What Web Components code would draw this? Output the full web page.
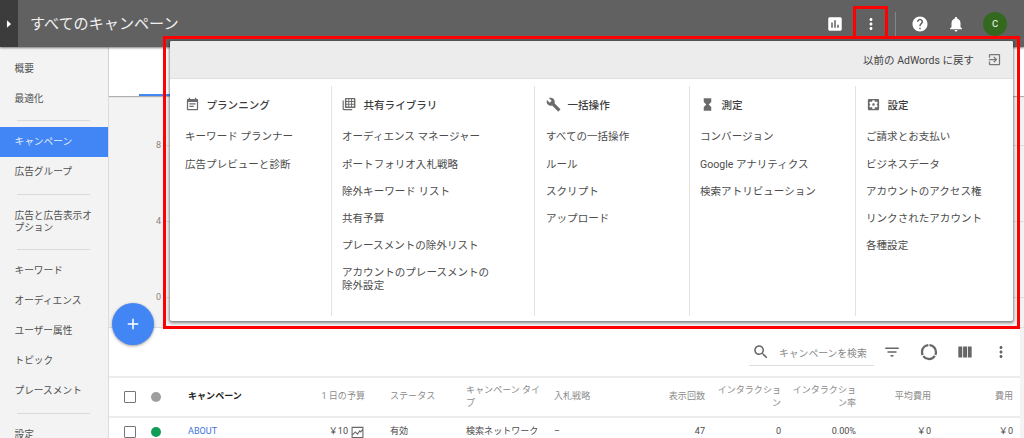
<!DOCTYPE html>
<html lang="ja"><head><meta charset="utf-8"><title>すべてのキャンペーン</title>
<style>
html,body{margin:0;height:438px;overflow:hidden;background:#f3f3f3}
body{font-family:Roboto,"Noto Sans CJK JP",sans-serif;color:#555;font-size:10.5px}
</style></head><body>
<ads-app></ads-app>
<script>
const ICONS = {
 report:'<path d="M19 3H5c-1.1 0-2 .9-2 2v14c0 1.1.9 2 2 2h14c1.1 0 2-.9 2-2V5c0-1.1-.9-2-2-2zM9 17H7v-7h2v7zm4 0h-2V7h2v10zm4 0h-2v-4h2v4z"/>',
 more:'<path d="M12 8c1.1 0 2-.9 2-2s-.9-2-2-2-2 .9-2 2 .9 2 2 2zm0 2c-1.1 0-2 .9-2 2s.9 2 2 2 2-.9 2-2-.9-2-2-2zm0 6c-1.1 0-2 .9-2 2s.9 2 2 2 2-.9 2-2-.9-2-2-2z"/>',
 help:'<path d="M12 2C6.48 2 2 6.48 2 12s4.480 10 10 10 10-4.480 10-10S17.520 2 12 2zm1 17h-2v-2h2v2zm2.070-7.750l-.9.920C13.450 12.900 13 13.500 13 15h-2v-.5c0-1.100.450-2.100 1.170-2.830l1.240-1.260c.370-.360.590-.860.590-1.410 0-1.100-.9-2-2-2s-2 .9-2 2H8c0-2.210 1.790-4 4-4s4 1.790 4 4c0 .880-.360 1.680-.930 2.250z"/>',
 bell:'<path d="M12 22c1.100 0 2-.9 2-2h-4c0 1.100.890 2 2 2zm6-6v-5c0-3.070-1.640-5.640-4.500-6.320V4c0-.830-.670-1.500-1.500-1.500s-1.500.670-1.500 1.500v.680C7.630 5.360 6 7.920 6 11v5l-2 2v1h16v-1l-2-2z"/>',
 exit:'<path d="M10.090 15.590L11.500 17l5-5-5-5-1.410 1.410L12.670 11H3v2h9.670l-2.580 2.590zM19 3H5c-1.110 0-2 .9-2 2v4h2V5h14v14H5v-4H3v4c0 1.100.890 2 2 2h14c1.100 0 2-.9 2-2V5c0-1.100-.9-2-2-2z"/>',
 note:'<path d="M17 10H7v2h10v-2zm2-7h-1V1h-2v2H8V1H6v2H5c-1.110 0-1.990.9-1.990 2L3 19c0 1.100.890 2 2 2h14c1.100 0 2-.9 2-2V5c0-1.100-.9-2-2-2zm0 16H5V8h14v11zm-5-5H7v2h7v-2z"/>',
 library:'<path d="M1 6v14.500c0 1.100.9 2 2 2h14.500v-2H3V6z"/><path fill-rule="evenodd" d="M7 1.500h14c1.100 0 2 .9 2 2v13.500c0 1.100-.9 2-2 2H7c-1.100 0-2-.9-2-2V3.500c0-1.100.9-2 2-2zm.5 2.500v3h3.300V4zm4.800 0v3h3.300V4zm4.900 0v3h3.300V4zM7.500 8.700v3h3.300v-3zm4.800 0v3h3.300v-3zm4.900 0v3h3.300v-3zM7.500 13.400v3h3.300v-3zm4.800 0v3h3.300v-3zm4.900 0v3h3.300v-3z"/>',
 wrench:'<path d="M22.700 19l-9.100-9.100c.9-2.300.4-5-1.500-6.900-2-2-5-2.400-7.400-1.300L9 6 6 9 1.600 4.700C.4 7.100.9 10.100 2.900 12.100c1.900 1.900 4.600 2.400 6.900 1.500l9.100 9.100c.4.4 1 .4 1.400 0l2.300-2.300c.5-.4.5-1.100.1-1.400z"/>',
 hourglass:'<path d="M6 2v6h.01L6 8.010 10 12l-4 4 .01.01H6V22h12v-5.990h-.01L18 16l-4-4 4-3.990-.01-.01H18V2H6z"/>',
 settings:'<path d="M12 10c-1.100 0-2 .9-2 2s.9 2 2 2 2-.9 2-2-.9-2-2-2zm7-7H5c-1.110 0-2 .9-2 2v14c0 1.100.890 2 2 2h14c1.110 0 2-.9 2-2V5c0-1.100-.890-2-2-2zm-1.750 9c0 .230-.020.460-.050.680l1.480 1.160c.130.110.170.300.080.450l-1.400 2.420c-.090.150-.270.210-.430.150l-1.740-.700c-.360.280-.760.510-1.180.690l-.260 1.850c-.030.170-.180.300-.350.300h-2.800c-.170 0-.320-.130-.350-.290l-.260-1.850c-.430-.180-.820-.410-1.180-.690l-1.740.700c-.160.060-.340 0-.430-.150l-1.400-2.420c-.090-.150-.050-.340.080-.450l1.480-1.160c-.030-.230-.050-.460-.050-.690s.020-.460.050-.680l-1.480-1.160c-.130-.110-.170-.300-.080-.450l1.400-2.420c.090-.150.270-.210.430-.150l1.740.700c.360-.280.760-.510 1.180-.690l.260-1.850c.030-.170.180-.300.350-.300h2.800c.170 0 .320.130.350.290l.260 1.850c.430.180.820.410 1.180.690l1.740-.700c.160-.060.340 0 .430.150l1.400 2.420c.090.150.050.340-.080.450l-1.480 1.160c.030.230.050.460.050.690z"/>',
 search:'<path d="M15.500 14h-.790l-.280-.270C15.410 12.590 16 11.110 16 9.500 16 5.910 13.090 3 9.500 3S3 5.910 3 9.500 5.910 16 9.500 16c1.610 0 3.090-.590 4.230-1.570l.270.280v.790l5 4.990L20.490 19l-4.990-5zm-6 0C7.010 14 5 11.990 5 9.500S7.010 5 9.500 5 14 7.010 14 9.500 11.990 14 9.500 14z"/>',
 filter:'<path d="M10 18h4v-2h-4v2zM3 6v2h18V6H3zm3 7h12v-2H6v2z"/>',
 donut:'<circle cx="12" cy="12" r="8.400" fill="none" stroke="currentColor" stroke-width="2.700" pathLength="300" stroke-dasharray="92 8" transform="rotate(-86 12 12)"/>',
 columns:'<path d="M4 5.500h4.700v13H4zM9.700 5.500h4.700v13H9.700zM15.400 5.500H20v13h-4.600z"/>',
 trend:'<path fill="none" stroke="currentColor" stroke-width="2" d="M2 2.500h20v19H2zM2 17l6-6 4 4 4-6 2 2 4-5"/>',
 plus:'<path d="M19 13h-6v6h-2v-6H5v-2h6V5h2v6h6v2z"/>',
 play:'<path d="M7 3l10 9-10 9z"/>'
};
function define(name, markup){
  customElements.define(name, class extends HTMLElement{
    constructor(){ super(); this.attachShadow({mode:'open'}).innerHTML = markup; }
  });
}
customElements.define('md-icon', class extends HTMLElement{
  connectedCallback(){
    if(this.shadowRoot) return;
    const s = this.getAttribute('size') || 16;
    this.attachShadow({mode:'open'}).innerHTML =
     `<style>:host{display:block;flex:none;width:${s}px;height:${s}px}svg{display:block;fill:currentColor}</style><svg width="${s}" height="${s}" viewBox="0 0 24 24">${ICONS[this.getAttribute('name')]}</svg>`;
  }
});

define('top-bar', `<style>
:host{display:flex;height:47px;background:#616161;color:#fff;box-shadow:0 1px 2px rgba(0,0,0,.5);position:relative}
.tog{width:18px;background:#3c3c3c;display:grid;place-items:center}
h1{font-weight:400;font-size:15.100px;line-height:49px;margin:0 auto 0 12px;color:#f0f0f0;white-space:nowrap}
.r{display:flex;align-items:center}
.sep{width:1px;height:24px;background:#858585;margin:0 15px 0 15px}
.av{width:24px;height:24px;border-radius:50%;background:#33691e;display:grid;place-items:center;font-size:9.5px;font-weight:500;color:#dfe8da;margin:0 17px 0 18px}
.m{margin-left:18px}.b{margin-left:18px}
</style><div class="tog"><md-icon name="play" size="10"></md-icon></div><h1>すべてのキャンペーン</h1>
<div class="r"><md-icon name="report" size="18"></md-icon><md-icon class="m" name="more" size="18"></md-icon><span class="sep"></span><md-icon name="help" size="18"></md-icon><md-icon class="b" name="bell" size="18"></md-icon><span class="av">C</span></div>`);

define('nav-item', `<style>
:host{display:flex;align-items:center;height:30.200px;padding-left:14.500px;font-size:9.700px;line-height:12px;color:#505050;white-space:nowrap}
:host([tall]){height:42px}
:host([active]){background:#4285f4;color:#e6efff;height:30px}
</style><span><slot></slot></span>`);
define('nav-divider', `<style>:host{display:block;height:1px;background:#dadada;margin:6px 18px 6px 17px}</style>`);
define('side-nav', `<style>
:host{display:block;box-sizing:border-box;width:109px;flex:none;background:#f3f3f3;border-right:1px solid #dcdcdc;padding-top:7px;overflow:hidden}
</style><nav-item>概要</nav-item><nav-item>最適化</nav-item><nav-divider></nav-divider>
<nav-item active>キャンペーン</nav-item><nav-item>広告グループ</nav-item><nav-divider></nav-divider>
<nav-item tall>広告と広告表示オ<br>プション</nav-item><nav-divider></nav-divider>
<nav-item>キーワード</nav-item><nav-item>オーディエンス</nav-item><nav-item>ユーザー属性</nav-item><nav-item>トピック</nav-item><nav-item>プレースメント</nav-item><nav-divider></nav-divider><nav-item>設定</nav-item>`);

define('chart-area', `<style>
:host{display:block}
.tabs{height:49px;background:#fff;box-shadow:0 1px 1px rgba(0,0,0,.28);display:flex;align-items:flex-end;position:relative}
.tabs i{width:60px;height:2px;background:#4285f4;margin-left:30px}
.plot{height:232px;border-bottom:1px solid #ddd;display:flex;flex-direction:column;padding-top:11px;box-sizing:border-box;overflow:hidden}
.tick{display:flex;flex:none;align-items:center;height:76px;color:#858585;font-size:9px}
.tick span{width:52px;text-align:right}.tick i{height:1px;flex:1;background:#dedede;margin-left:5px}
</style><div class="tabs"><i></i></div><div class="plot"><div class="tick"><span>8</span><i></i></div><div class="tick"><span>4</span><i></i></div><div class="tick"><span>0</span><i></i></div></div>`);

define('table-tools', `<style>
:host{display:flex;height:48px;align-items:center;justify-content:flex-end;border-bottom:2px solid #ececec;color:#666}
.s{display:flex;align-items:center;width:125px;height:27px;border-bottom:1px solid #ddd;box-sizing:border-box;margin-right:9px;color:#888;font-size:9.800px;white-space:nowrap}
.s md-icon{color:#666;margin:0 9px 0 3px}
.s span{padding-top:2px}
.d{margin-left:18px}.c{margin-left:16px}.m{margin:0 10px 0 17px}
</style><div class="s"><md-icon name="search" size="18"></md-icon><span>キャンペーンを検索</span></div>
<md-icon name="filter" size="18"></md-icon><md-icon class="d" name="donut" size="20"></md-icon><md-icon class="c" name="columns" size="20"></md-icon><md-icon class="m" name="more" size="18"></md-icon>`);

define('table-row', `<style>
:host{display:grid;grid-template-columns:26px 38px 112px 65px 101px 88px 86px 65px 76px 75px 75px 82px;padding-left:15px;height:28px;align-items:center;font-size:9.050px;line-height:13.500px;white-space:nowrap;color:#4a4a4a}
:host([head]){height:38px;border-bottom:2px solid #ececec;color:#8c8c8c}
.box{width:12px;height:12px;box-sizing:border-box;border:1.500px solid #757575;border-radius:1px}
.dot{width:10px;height:10px;border-radius:50%;background:var(--dot,#9e9e9e);margin-left:1px}
slot{display:block}.r{text-align:right}slot[name=status]{padding-left:25px}
</style><span class="box"></span><span class="dot"></span><slot name="name"></slot><slot name="budget" class="r"></slot><slot name="status"></slot><slot name="type"></slot><slot name="bid"></slot><slot name="impr" class="r"></slot><slot name="inter" class="r"></slot><slot name="rate" class="r"></slot><slot name="avg" class="r"></slot><slot name="cost" class="r"></slot>`);

define('campaign-table', `<style>
:host{display:block;background:#fff;margin-right:4px;height:110px;overflow:hidden}
b{color:#222;font-weight:700}.link{color:#4272db}
.bud{display:flex;justify-content:flex-end;align-items:center;gap:3px;margin-right:1px}
.bud md-icon{color:#666}
</style><table-tools></table-tools>
<table-row head><b slot="name">キャンペーン</b><span slot="budget">1 日の予算</span><span slot="status">ステータス</span><span slot="type">キャンペーン タイ<br>プ</span><span slot="bid">入札戦略</span><span slot="impr">表示回数</span><span slot="inter">インタラクショ<br>ン</span><span slot="rate">インタラクショ<br>ン率</span><span slot="avg">平均費用</span><span slot="cost">費用</span></table-row>
<table-row style="--dot:#0f9d58"><span slot="name" class="link">ABOUT</span><span slot="budget" class="bud">￥10 <md-icon name="trend" size="13"></md-icon></span><span slot="status">有効</span><span slot="type">検索ネットワーク</span><span slot="bid">–</span><span slot="impr">47</span><span slot="inter">0</span><span slot="rate">0.00%</span><span slot="avg">￥0</span><span slot="cost">￥0</span></table-row>`);

define('menu-item', `<style>:host{display:flex;align-items:center;height:27.250px;line-height:12.500px;white-space:nowrap;color:#4c4c4c}:host([tall]){height:39px}</style><span><slot></slot></span>`);
define('menu-column', `<style>
:host{display:block;padding-left:10px;border-right:1px solid #e3e3e3;font-size:10.550px;box-sizing:border-box}
:host(:last-child){border:0}
:host(:first-child){padding-left:15px}
:host(:nth-child(3)){padding-left:11px}
.h{display:flex;align-items:center;height:36px;margin-bottom:2px;font-weight:500;color:#3c3c3c;white-space:nowrap}
.h slot{display:block}
slot[name=icon]{color:#6b6b6b;width:21.500px}
</style><div class="h"><slot name="icon"></slot><slot name="title"></slot></div><slot></slot>`);
define('tools-menu', `<style>
:host{display:block;background:#fff;border-radius:2px;box-shadow:0 1px 3px 1px rgba(0,0,0,.45);height:280px}
header{height:37px;background:#ececec;border-bottom:1px solid #e0e0e0;border-radius:2px 2px 0 0;display:flex;align-items:center;justify-content:flex-end;gap:12.500px;padding-right:11.500px;color:#444;font-size:10.500px}
header md-icon{color:#777}
.g{display:grid;grid-template-columns:162px 203px 155px 166px 1fr;height:230px;margin-top:7px}
</style><header><span>以前の AdWords に戻す</span><md-icon name="exit" size="15"></md-icon></header>
<div class="g">
<menu-column><md-icon slot="icon" name="note" size="15"></md-icon><span slot="title">プランニング</span><menu-item>キーワード プランナー</menu-item><menu-item>広告プレビューと診断</menu-item></menu-column>
<menu-column><md-icon slot="icon" name="library" size="14"></md-icon><span slot="title">共有ライブラリ</span><menu-item>オーディエンス マネージャー</menu-item><menu-item>ポートフォリオ入札戦略</menu-item><menu-item>除外キーワード リスト</menu-item><menu-item>共有予算</menu-item><menu-item>プレースメントの除外リスト</menu-item><menu-item tall>アカウントのプレースメントの<br>除外設定</menu-item></menu-column>
<menu-column><md-icon slot="icon" name="wrench" size="15"></md-icon><span slot="title">一括操作</span><menu-item>すべての一括操作</menu-item><menu-item>ルール</menu-item><menu-item>スクリプト</menu-item><menu-item>アップロード</menu-item></menu-column>
<menu-column><md-icon slot="icon" name="hourglass" size="15"></md-icon><span slot="title">測定</span><menu-item>コンバージョン</menu-item><menu-item>Google アナリティクス</menu-item><menu-item>検索アトリビューション</menu-item></menu-column>
<menu-column><md-icon slot="icon" name="settings" size="15"></md-icon><span slot="title">設定</span><menu-item>ご請求とお支払い</menu-item><menu-item>ビジネスデータ</menu-item><menu-item>アカウントのアクセス権</menu-item><menu-item>リンクされたアカウント</menu-item><menu-item>各種設定</menu-item></menu-column>
</div>`);

define('ads-app', `<style>
:host{display:block;width:1024px;height:438px;position:relative;overflow:hidden}
.body{display:flex;height:391px}.main{flex:1;min-width:0}
top-bar{z-index:1}
tools-menu{position:absolute;left:170px;top:41px;width:843px;z-index:2}
.fab{position:absolute;left:112px;top:303px;width:42px;height:42px;border-radius:50%;background:#4285f4;color:#fff;display:grid;place-items:center;box-shadow:0 1px 3px rgba(0,0,0,.4)}
.mark{position:absolute;box-sizing:border-box;border:3px solid #f00;z-index:3}
.big{left:163px;top:36px;width:857px;height:293px}
.small{left:853px;top:6px;width:35px;height:32px;border-width:3px 3px 0}
</style><top-bar></top-bar><div class="body"><side-nav></side-nav><div class="main"><chart-area></chart-area><campaign-table></campaign-table></div></div>
<div class="fab"><md-icon name="plus" size="18"></md-icon></div><tools-menu></tools-menu><div class="mark big"></div><div class="mark small"></div>`);
</script></body></html>
